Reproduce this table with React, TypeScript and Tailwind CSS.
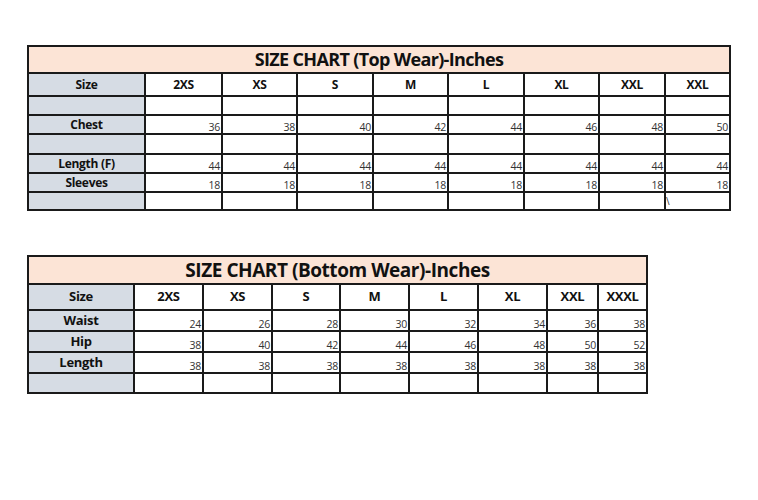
import React from "react";

type Row = { label: string; values: (string | null)[]; special?: string };

const topCols = [115, 75, 73, 74, 73, 74, 73, 64, 63];
const topRows = [25, 21, 17, 17, 18, 17, 17, 16];
const topSizes = ["2XS", "XS", "S", "M", "L", "XL", "XXL", "XXL"];
const topData: Row[] = [
  { label: "", values: Array(8).fill(null) },
  { label: "Chest", values: ["36", "38", "40", "42", "44", "46", "48", "50"] },
  { label: "", values: Array(8).fill(null) },
  { label: "Length (F)", values: Array(8).fill("44") },
  { label: "Sleeves", values: Array(8).fill("18") },
  { label: "", values: Array(8).fill(null), special: "\\" },
];

const botCols = [104, 67, 67, 66, 67, 67, 67, 49, 47];
const botRows = [26, 24, 19, 19, 19, 18];
const botSizes = ["2XS", "XS", "S", "M", "L", "XL", "XXL", "XXXL"];
const botData: Row[] = [
  { label: "Waist", values: ["24", "26", "28", "30", "32", "34", "36", "38"] },
  { label: "Hip", values: ["38", "40", "42", "44", "46", "48", "50", "52"] },
  { label: "Length", values: ["38", "38", "38", "38", "38", "38", "38", "38"] },
  { label: "", values: Array(8).fill(null) },
];

const font = { fontFamily: "'Open Sans', 'Noto Sans', sans-serif" };

function Chart({
  title,
  cols,
  rows,
  sizes,
  data,
  big,
}: {
  title: string;
  cols: number[];
  rows: number[];
  sizes: string[];
  data: Row[];
  big?: boolean;
}) {
  const gridTemplateColumns = cols.map((c) => `${c}px`).join(" ");
  const gridTemplateRows = rows.map((r) => `${r}px`).join(" ");
  return (
    <div
      className="grid gap-[2px] bg-[#1a1a1a] p-[2px] w-fit"
      style={{ gridTemplateColumns, gridTemplateRows, ...font }}
    >
      <div
        className={`col-span-9 bg-[#fce4d6] flex items-center justify-center font-bold text-[#111] ${
          big ? "text-[19px] tracking-[-0.45px]" : "text-[18px] tracking-[-0.65px]"
        }`}
      >
        {title}
      </div>
      <div
        className={`bg-[#d6dce4] flex items-center justify-center font-bold text-[#111] tracking-[-0.3px] ${
          big ? "text-[13px]" : "text-[12px]"
        }`}
      >
        Size
      </div>
      {sizes.map((s, i) => (
        <div
          key={i}
          className={`bg-white flex justify-center font-bold text-[#111] tracking-[-0.3px] ${
            big ? "text-[13px] items-center" : "text-[12px]"
          } ${!big && i === 7 ? "items-end pb-[1px]" : !big ? "items-center" : ""}`}
        >
          {s}
        </div>
      ))}
      {data.map((r, ri) => (
        <React.Fragment key={ri}>
          <div
            className={`bg-[#d6dce4] flex items-center justify-center font-bold text-[#111] tracking-[-0.3px] leading-none ${
              big ? "text-[13px]" : "text-[12px]"
            }`}
          >
            {r.label}
          </div>
          {r.values.map((v, vi) => (
            <div
              key={vi}
              className="bg-white flex items-end justify-end pr-[1px] pb-[1px] text-[10.5px] leading-none text-[#333] tracking-[-0.3px]"
            >
              {v}
              {r.special && vi === 7 ? (
                <span className="mr-auto self-center text-[10px] text-[#333]">{r.special}</span>
              ) : null}
            </div>
          ))}
        </React.Fragment>
      ))}
    </div>
  );
}

export default function App() {
  return (
    <div className="w-[758px] h-[500px] bg-white pl-[27px] pt-[45px] flex flex-col">
      <Chart
        title="SIZE CHART (Top Wear)-Inches"
        cols={topCols}
        rows={topRows}
        sizes={topSizes}
        data={topData}
      />
      <div className="h-[44px]" />
      <Chart
        title="SIZE CHART (Bottom Wear)-Inches"
        cols={botCols}
        rows={botRows}
        sizes={botSizes}
        data={botData}
        big
      />
    </div>
  );
}
